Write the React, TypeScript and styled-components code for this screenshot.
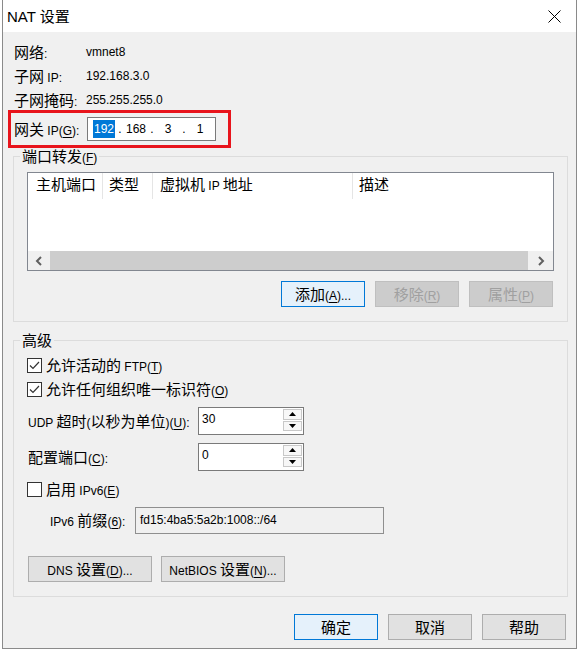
import React from "react"
import styled, { createGlobalStyle } from "styled-components"

const GlobalStyle = createGlobalStyle`
  html, body {
    margin: 0;
    padding: 0;
    background: #ffffff;
  }
  body {
    font-family: "Liberation Sans", "Noto Sans CJK SC", sans-serif;
    font-size: 12px;
    color: #000;
  }
  u {
    text-underline-offset: 2px;
  }
`

const Han = styled.span`
  font-family: "Noto Sans CJK SC", sans-serif;
  font-size: 15px;
  line-height: 1;
`

const Window = styled.div`
  margin-left: 2px;
  width: 573px;
  border: 1px solid #8a8a8a;
  border-top: 0;
  background: #f0f0f0;
  display: flex;
  flex-direction: column;
`

const TitleBar = styled.div`
  height: 32px;
  background: #ffffff;
  display: flex;
  align-items: center;
  justify-content: space-between;
  padding-left: 4px;
`

const Title = styled.span`
  font-size: 15px;
`

const CloseButton = styled.div`
  width: 44px;
  height: 32px;
  display: flex;
  align-items: center;
  justify-content: center;
`

const Body = styled.div`
  display: flex;
  flex-direction: column;
  padding: 9px 0 8px 0;
`

const InfoList = styled.div`
  display: flex;
  flex-direction: column;
  gap: 2px;
  padding-left: 11px;
`

const InfoRow = styled.div`
  height: 22px;
  display: flex;
  align-items: center;
`

const InfoLabel = styled.span`
  width: 72px;
`

const GatewayBox = styled.div`
  margin: -1px 0 0 5px;
  width: 223px;
  height: 38px;
  box-sizing: border-box;
  border: 3px solid #e8141c;
  display: flex;
  align-items: center;
  padding-left: 3px;
`

const GatewayLabel = styled.span`
  width: 73px;
`

const IpBox = styled.div`
  width: 129px;
  height: 24px;
  box-sizing: border-box;
  border: 1px solid #7a7a7a;
  background: #fff;
  display: flex;
  align-items: center;
  padding-left: 3px;
`

const IpField = styled.span`
  width: 26px;
  text-align: center;
`

const IpDot = styled.span`
  width: 6px;
  text-align: center;
`

const Selected = styled.span`
  background: #0078d7;
  color: #fff;
  padding: 2px 1px;
`

const Group = styled.fieldset<{ $top?: number }>`
  margin: ${p => p.$top ?? 0}px 8px 0 10px;
  padding: 8px 13px 14px 13px;
  border: 1px solid #dcdcdc;
  min-width: 0;
  display: flex;
  flex-direction: column;
`

const GroupTitle = styled.legend`
  height: 16px;
  line-height: 16px;
  padding: 0 2px;
  margin-left: -7px;
`

const ListView = styled.div`
  height: 99px;
  box-sizing: border-box;
  border: 1px solid #828790;
  background: #fff;
  display: flex;
  flex-direction: column;
`

const ListHeader = styled.div`
  height: 26px;
  display: flex;
`

const HeaderCell = styled.div<{ $w?: number; $pad: number }>`
  ${p => (p.$w ? `width: ${p.$w}px;` : "flex: 1;")}
  box-sizing: border-box;
  padding-left: ${p => p.$pad}px;
  line-height: 26px;
  border-right: ${p => (p.$w ? "1px solid #e5e5e5" : "none")};
  white-space: nowrap;
`

const ListBody = styled.div`
  flex: 1;
`

const ScrollBar = styled.div`
  height: 19px;
  display: flex;
  background: #f0f0f0;
`

const ScrollArrow = styled.div<{ $w: number }>`
  width: ${p => p.$w}px;
  display: flex;
  align-items: center;
  justify-content: center;
`

const ScrollThumb = styled.div`
  flex: 1;
  background: #cdcdcd;
`

const ButtonRow = styled.div<{ $top: number; $end?: boolean; $gap: number; $side?: number }>`
  display: flex;
  justify-content: ${p => (p.$end ? "flex-end" : "flex-start")};
  gap: ${p => p.$gap}px;
  margin-top: ${p => p.$top}px;
  ${p => (p.$end ? `margin-right: ${p.$side ?? 0}px;` : `margin-left: ${p.$side ?? 0}px;`)}
`

const Button = styled.button<{ $w?: number; $primary?: boolean }>`
  width: ${p => p.$w ?? 84}px;
  height: 26px;
  box-sizing: border-box;
  border: 1px solid ${p => (p.$primary ? "#0078d7" : "#adadad")};
  background: ${p => (p.$primary ? "#e5f1fb" : "#e1e1e1")};
  font: inherit;
  color: #000;
  padding: 0;
  white-space: nowrap;

  &:disabled {
    background: #cccccc;
    border-color: #bfbfbf;
    color: #a0a0a0;
  }
`

const CheckRow = styled.label<{ $top?: number }>`
  height: 24px;
  margin-top: ${p => p.$top ?? 0}px;
  display: flex;
  align-items: center;
  gap: 4px;
`

const CheckBox = styled.span`
  width: 15px;
  height: 15px;
  box-sizing: border-box;
  border: 1px solid #333;
  background: #fff;
  display: flex;
  align-items: center;
  justify-content: center;
`

const FieldRow = styled.div<{ $top: number; $h: number; $indent?: number }>`
  height: ${p => p.$h}px;
  margin-top: ${p => p.$top}px;
  padding-left: ${p => p.$indent ?? 0}px;
  display: flex;
  align-items: center;
`

const FieldLabel = styled.span<{ $w: number }>`
  width: ${p => p.$w}px;
  padding-left: 1px;
  white-space: nowrap;
`

const SpinBox = styled.div`
  width: 106px;
  height: 28px;
  box-sizing: border-box;
  border: 1px solid #7a7a7a;
  background: #fff;
  display: flex;
`

const SpinValue = styled.span`
  flex: 1;
  padding: 4px 0 0 3px;
`

const SpinColumn = styled.div`
  width: 19px;
  padding: 1px 1px 3px 0;
  display: flex;
  flex-direction: column;
  gap: 1px;
`

const SpinButton = styled.div`
  flex: 1;
  border: 1px solid #c8c8c8;
  background: #f7f7f7;
  display: flex;
  align-items: center;
  justify-content: center;
`

const PrefixBox = styled.div`
  width: 249px;
  height: 27px;
  box-sizing: border-box;
  border: 1px solid #8f8f8f;
  background: #f0f0f0;
  display: flex;
  align-items: center;
  padding: 0 0 2px 4px;
`

const Check = () => (
  <svg width="11" height="11" viewBox="0 0 11 11">
    <polyline points="1,5.5 4,8.5 10,2" fill="none" stroke="#333" strokeWidth="1.2" />
  </svg>
)

const Chevron = ({ dir }: { dir: "left" | "right" }) => (
  <svg width="8" height="10" viewBox="0 0 8 10">
    <polyline
      points={dir === "left" ? "6,1 2,5 6,9" : "2,1 6,5 2,9"}
      fill="none"
      stroke="#606060"
      strokeWidth="2"
    />
  </svg>
)

const Spin = ({ value }: { value: string }) => (
  <SpinBox>
    <SpinValue>{value}</SpinValue>
    <SpinColumn>
      <SpinButton>
        <svg width="7" height="4" viewBox="0 0 7 4"><polygon points="0,4 3.5,0 7,4" fill="#000" /></svg>
      </SpinButton>
      <SpinButton>
        <svg width="7" height="4" viewBox="0 0 7 4"><polygon points="0,0 3.5,4 7,0" fill="#000" /></svg>
      </SpinButton>
    </SpinColumn>
  </SpinBox>
)

export default function App() {
  return (
    <>
      <GlobalStyle />
      <Window>
        <TitleBar>
          <Title>NAT <Han>设置</Han></Title>
          <CloseButton>
            <svg width="13" height="13" viewBox="0 0 13 13">
              <path d="M0.5 0.5 L12.5 12.5 M12.5 0.5 L0.5 12.5" stroke="#000" strokeWidth="1" />
            </svg>
          </CloseButton>
        </TitleBar>

        <Body>
          <InfoList>
            <InfoRow>
              <InfoLabel><Han>网络</Han>:</InfoLabel>
              <span>vmnet8</span>
            </InfoRow>
            <InfoRow>
              <InfoLabel><Han>子网</Han> IP:</InfoLabel>
              <span>192.168.3.0</span>
            </InfoRow>
            <InfoRow>
              <InfoLabel><Han>子网掩码</Han>:</InfoLabel>
              <span>255.255.255.0</span>
            </InfoRow>
          </InfoList>

          <GatewayBox>
            <GatewayLabel><Han>网关</Han> IP(<u>G</u>):</GatewayLabel>
            <IpBox>
              <IpField><Selected>192</Selected></IpField>
              <IpDot>.</IpDot>
              <IpField>168</IpField>
              <IpDot>.</IpDot>
              <IpField>3</IpField>
              <IpDot>.</IpDot>
              <IpField>1</IpField>
            </IpBox>
          </GatewayBox>

          <Group>
            <GroupTitle><Han>端口转发</Han>(<u>F</u>)</GroupTitle>
            <ListView>
              <ListHeader>
                <HeaderCell $w={75} $pad={8}><Han>主机端口</Han></HeaderCell>
                <HeaderCell $w={50} $pad={6}><Han>类型</Han></HeaderCell>
                <HeaderCell $w={200} $pad={7}><Han>虚拟机</Han> IP <Han>地址</Han></HeaderCell>
                <HeaderCell $pad={6}><Han>描述</Han></HeaderCell>
              </ListHeader>
              <ListBody />
              <ScrollBar>
                <ScrollArrow $w={22}><Chevron dir="left" /></ScrollArrow>
                <ScrollThumb />
                <ScrollArrow $w={25}><Chevron dir="right" /></ScrollArrow>
              </ScrollBar>
            </ListView>
            <ButtonRow $top={10} $end $gap={10} $side={1}>
              <Button $primary><Han>添加</Han>(<u>A</u>)...</Button>
              <Button disabled><Han>移除</Han>(<u>R</u>)</Button>
              <Button disabled><Han>属性</Han>(<u>P</u>)</Button>
            </ButtonRow>
          </Group>

          <Group $top={10}>
            <GroupTitle><Han>高级</Han></GroupTitle>
            <CheckRow $top={-3}>
              <CheckBox><Check /></CheckBox>
              <span><Han>允许活动的</Han> FTP(<u>T</u>)</span>
            </CheckRow>
            <CheckRow>
              <CheckBox><Check /></CheckBox>
              <span><Han>允许任何组织唯一标识符</Han>(<u>O</u>)</span>
            </CheckRow>
            <FieldRow $top={6} $h={28}>
              <FieldLabel $w={170}>UDP <Han>超时</Han>(<Han>以秒为单位</Han>)(<u>U</u>):</FieldLabel>
              <Spin value="30" />
            </FieldRow>
            <FieldRow $top={8} $h={28}>
              <FieldLabel $w={170}><Han>配置端口</Han>(<u>C</u>):</FieldLabel>
              <Spin value="0" />
            </FieldRow>
            <CheckRow $top={6}>
              <CheckBox />
              <span><Han>启用</Han> IPv6(<u>E</u>)</span>
            </CheckRow>
            <FieldRow $top={6} $h={27} $indent={22}>
              <FieldLabel $w={85}>IPv6 <Han>前缀</Han>(<u>6</u>):</FieldLabel>
              <PrefixBox>fd15:4ba5:5a2b:1008::/64</PrefixBox>
            </FieldRow>
            <ButtonRow $top={22} $gap={9} $side={1}>
              <Button $w={124}>DNS <Han>设置</Han>(<u>D</u>)...</Button>
              <Button $w={124}>NetBIOS <Han>设置</Han>(<u>N</u>)...</Button>
            </ButtonRow>
          </Group>

          <ButtonRow $top={17} $end $gap={10} $side={10}>
            <Button $primary><Han>确定</Han></Button>
            <Button><Han>取消</Han></Button>
            <Button><Han>帮助</Han></Button>
          </ButtonRow>
        </Body>
      </Window>
    </>
  )
}
